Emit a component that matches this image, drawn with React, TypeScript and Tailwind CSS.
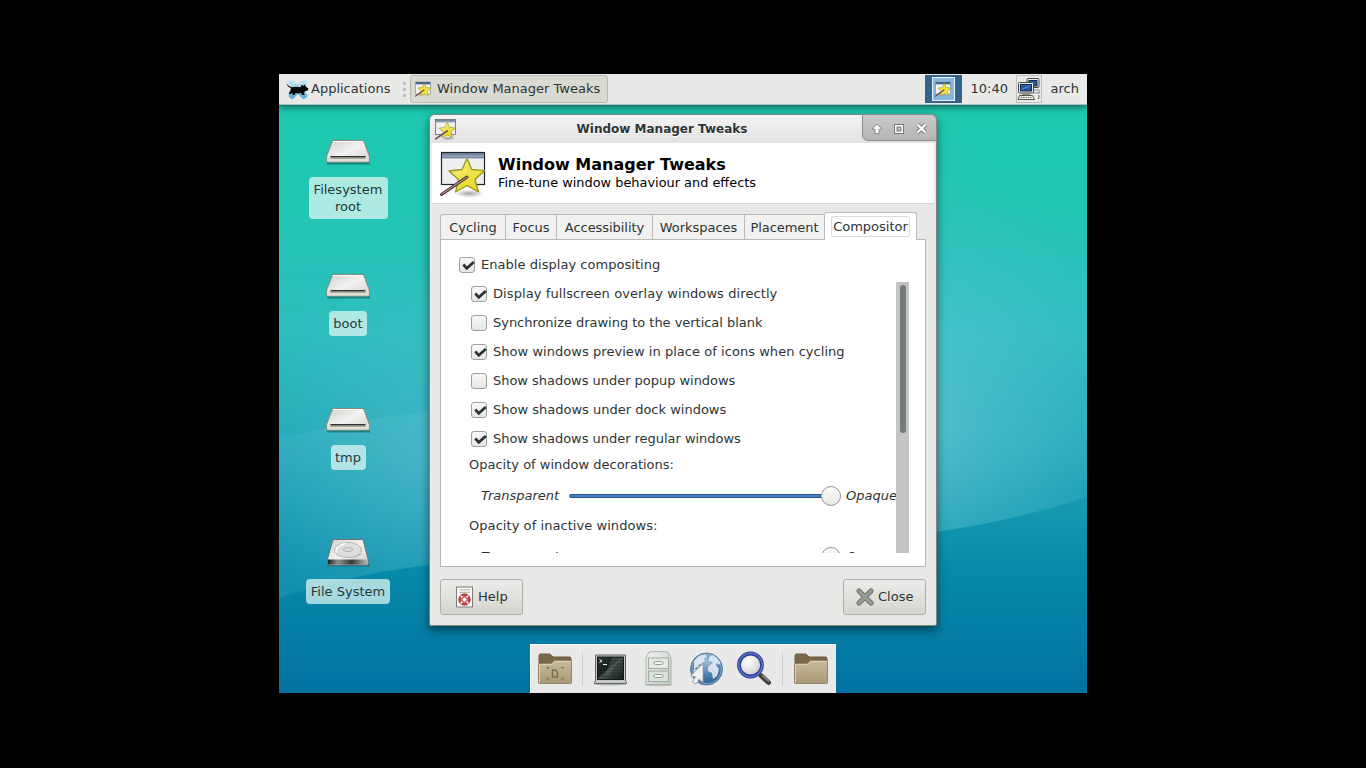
import React from "react";

function TweaksIcon({ className, small = false }: { className: string; small?: boolean }) {
  return (
    <svg viewBox="0 0 48 48" className={className}>
      <defs>
        <linearGradient id="tw-star" x1="0" y1="0" x2="0.6" y2="1">
          <stop offset="0" stopColor="#fbf47c" />
          <stop offset="1" stopColor="#e6d726" />
        </linearGradient>
        <linearGradient id="tw-bar" x1="0" y1="0" x2="0" y2="1">
          <stop offset="0" stopColor="#5c7590" />
          <stop offset="1" stopColor="#a3b6c9" />
        </linearGradient>
        <radialGradient id="tw-shadow">
          <stop offset="0" stopColor="#000" stopOpacity="0.35" />
          <stop offset="1" stopColor="#000" stopOpacity="0" />
        </radialGradient>
      </defs>
      {small ? (
        <>
          <rect x="2" y="3" width="44" height="36" fill="#f0f1f2" stroke="#8a929a" strokeWidth="2" />
          <rect x="2" y="3" width="44" height="7" fill="#46668a" />
          <path
            d="M28 8l5.500 11.500L47 21l-9.500 10 2.500 13-12-6-12 6 2.500-13L9 21l13.500-1.500z"
            fill="#f3e53c"
            stroke="#a89d2c"
            strokeWidth="2"
            strokeLinejoin="round"
          />
          <path d="M2 45L27 27" stroke="#6a4c48" strokeWidth="4" strokeLinecap="round" />
        </>
      ) : (
        <>
          <ellipse cx="31" cy="44.500" rx="15" ry="4" fill="url(#tw-shadow)" />
          <rect x="3.500" y="3.500" width="43" height="32" fill="#efeff0" stroke="#23272b" strokeWidth="1.200" />
          <rect x="4" y="4" width="42" height="4.500" fill="url(#tw-bar)" />
          <path d="M4 8.800h42" stroke="#3d4f63" strokeWidth="0.800" />
          <path
            d="M29 9.500l4.800 11 12.700 1.200-9.500 8.800 3.500 12.500-11.500-6.500-11.500 6.500 3-12.500L11 22l13-1.500z"
            fill="url(#tw-star)"
            stroke="#99932a"
            strokeWidth="1.300"
            strokeLinejoin="round"
          />
          <path d="M3.500 45.500L29 28" stroke="#3a2628" strokeWidth="3" strokeLinecap="round" />
          <path d="M4 45L29 28" stroke="#b98d8f" strokeWidth="1.400" strokeLinecap="round" />
        </>
      )}
    </svg>
  );
}

function MouseLogo() {
  return (
    <svg viewBox="0 0 24 22" className="h-[22px] w-6 shrink-0">
      <defs>
        <linearGradient id="mouse-x" x1="0" y1="0" x2="0" y2="22" gradientUnits="userSpaceOnUse">
          <stop offset="0" stopColor="#d8f1fa" />
          <stop offset="1" stopColor="#4da6d0" />
        </linearGradient>
      </defs>
      <path d="M5.500 4.500L18 17.500M18.500 4.500L6 17.500" stroke="url(#mouse-x)" strokeWidth="6.500" strokeLinecap="round" />
      <path
        d="M.5 5C2 8 4 8.800 6 9.300c3-1 6-.5 8.500 0l1-2.300 1.800.8 1.700-1.300.8 2.300 2.700 1.700-1 2.300-2.700.5-1 2.400 1.200 1.300h-3l-.8-2c-2 .5-4 .5-5.500 0l-1.200 2h-2L6.300 15 4 16.300l-1.300-1L4.500 12.500 4.800 10C2.500 9.300 1 7.500.5 5z"
        fill="#050607"
      />
    </svg>
  );
}

function NetworkIcon() {
  return (
    <svg viewBox="0 0 24 24" className="size-6">
      <rect x="10" y="1.500" width="12" height="9" rx="1" fill="#ecece4" stroke="#454b4b" />
      <rect x="12" y="3.500" width="8" height="5.500" fill="#2459a0" stroke="#122b50" />
      <path d="M15 13h7l.5 3H17z" fill="#ecece4" stroke="#72756f" strokeWidth=".8" />
      <path d="M2.500 18.500h13l2 4H1z" fill="#f3f2e4" stroke="#55584f" />
      <path d="M3.500 20.500h11" stroke="#5f625d" strokeDasharray="1.500 1" />
      <rect x="1.500" y="5.500" width="15" height="10.500" rx="1" fill="#ecece4" stroke="#454b4b" />
      <rect x="3.500" y="7.500" width="11" height="6.500" fill="#2459a0" stroke="#122b50" />
      <path d="M4.500 12.500l9-4" stroke="#5d8cc8" />
      <path d="M5 17.200h8" stroke="#60645f" />
      <path d="M21.500 18c1 1 1 2-.3 4" stroke="#555" fill="none" />
    </svg>
  );
}

function DriveIcon({ disk = false }: { disk?: boolean }) {
  return (
    <svg viewBox="0 0 48 30" className="h-[30px] w-12">
      <defs>
        <linearGradient id="dr-top" x1="0" y1="0" x2="1" y2="1">
          <stop offset="0" stopColor="#cfcfcc" />
          <stop offset=".5" stopColor="#f3f2f1" />
          <stop offset="1" stopColor="#cfcfcb" />
        </linearGradient>
        <linearGradient id="dr-front" x1="0" y1="0" x2="1" y2="0">
          <stop offset="0" stopColor="#1c211e" />
          <stop offset=".25" stopColor="#8b908d" />
          <stop offset=".6" stopColor="#343b37" />
          <stop offset="1" stopColor="#b5bab5" />
        </linearGradient>
      </defs>
      <path d="M3 27.500h43" stroke="#0d5050" strokeOpacity=".55" strokeWidth="2" />
      {disk ? (
        <>
          <path d="M9 1.500h30l5 19.500v6H3.500v-6z" fill="url(#dr-top)" stroke="#6e7370" strokeLinejoin="round" />
          <rect x="4" y="21.500" width="39.500" height="5" fill="url(#dr-front)" />
          <ellipse cx="24" cy="12" rx="13.500" ry="7.500" fill="#dededd" stroke="#b4b6b4" />
          <path d="M12.500 14.500a14 7.500 0 0 1 9-9" fill="none" stroke="#fff" strokeWidth="1.500" />
          <ellipse cx="24" cy="11.500" rx="5" ry="2" fill="#dcdcdc" stroke="#a5a7a5" strokeWidth=".8" />
          <path d="M30 19.500l8-4" stroke="#c0c2c0" strokeWidth="1.500" />
        </>
      ) : (
        <>
          <path d="M8.500 4.500h31l5.800 15.500v6H2.700v-6z" fill="url(#dr-top)" stroke="#85867c" strokeLinejoin="round" />
          <path d="M3.200 20.200h41.600v5.300H3.200z" fill="#e2e1d8" />
          <path d="M6.500 20.700h35" stroke="#2c3029" strokeWidth="1.600" />
          <path d="M6.500 22.200h35" stroke="#8a8c82" />
          <path d="M9 5.500h30" stroke="#fff" />
        </>
      )}
    </svg>
  );
}

function FolderIcon({ docs = false }: { docs?: boolean }) {
  return (
    <svg viewBox="0 0 36 36" className="size-9">
      <defs>
        <linearGradient id="fo" x1="0" y1="0" x2="0" y2="1">
          <stop offset="0" stopColor="#c9bb9b" />
          <stop offset="1" stopColor="#a99976" />
        </linearGradient>
      </defs>
      <path d="M2 28V4.500q0-1.500 1.500-1.500h9.500l3 3H32.500q1.500 0 1.500 1.500V28z" fill="#786849" stroke="#6d5f43" />
      <path
        d="M1.500 31.500V13.500q0-1 1-1H14l3.500-3H33.500q1 0 1 1v21q0 1-1 1h-31q-1 0-1-1z"
        fill="url(#fo)"
        stroke="#93846a"
      />
      <path d="M2.500 31V13.500h12L18 10.500h15.500" fill="none" stroke="#dccfb2" />
      {docs && (
        <g fill="none" stroke="#7c6d50" strokeWidth="1.500">
          <path d="M15.500 19h3l2 2.500V26h-5z" />
          <path d="M10.500 18v-1.500h2M26 18v-1.500h-2M10.500 26.500V28h2M26 26.500V28h-2" strokeWidth="1.200" />
        </g>
      )}
    </svg>
  );
}

function TerminalIcon() {
  return (
    <svg viewBox="0 0 36 36" className="size-9">
      <defs>
        <linearGradient id="te" x1="0" y1="0" x2="1" y2="1">
          <stop offset="0" stopColor="#2b3634" />
          <stop offset=".45" stopColor="#1b2423" />
          <stop offset=".5" stopColor="#46534f" />
          <stop offset="1" stopColor="#16201f" />
        </linearGradient>
      </defs>
      <ellipse cx="18" cy="33" rx="17" ry="1.500" fill="#000" fillOpacity=".25" />
      <path d="M3.500 4h30v25.500l1 2v1H2.500v-1l1-2z" fill="#c4c9c3" stroke="#616763" />
      <rect x="5.500" y="6" width="26" height="22.500" fill="url(#te)" stroke="#101716" />
      <path d="M20 6.500h9L17 24h-4z" fill="#81908b" fillOpacity=".3" />
      <path d="M6 10h25M6 13h25M6 16h25M6 19h25M6 22h25M6 25h25" stroke="#0c1515" strokeOpacity=".35" />
      <path d="M7.500 8.500l2.500 1.500-2.500 1.500M11 13.500h4" fill="none" stroke="#f1f5f3" />
    </svg>
  );
}

function CabinetIcon() {
  return (
    <svg viewBox="0 0 36 36" className="size-9">
      <defs>
        <linearGradient id="ca" x1="0" y1="0" x2="1" y2="1">
          <stop offset="0" stopColor="#eef2ee" />
          <stop offset="1" stopColor="#c0c9c1" />
        </linearGradient>
      </defs>
      <ellipse cx="18.500" cy="34" rx="14" ry="1.500" fill="#000" fillOpacity=".18" />
      <path d="M9 1q9.500-1 19 0l3 6v26.500H6V7z" fill="url(#ca)" stroke="#aab4ab" strokeLinejoin="round" />
      <rect x="8.500" y="7" width="20" height="10.500" fill="#e4e9e4" stroke="#a1aba2" />
      <rect x="8.500" y="20" width="20" height="10.500" fill="#dbe1db" stroke="#a1aba2" />
      <rect x="14" y="10.500" width="9" height="3" rx="1.500" fill="#f3f5f3" stroke="#949d95" />
      <rect x="14" y="23.500" width="9" height="3" rx="1.500" fill="#f3f5f3" stroke="#949d95" />
    </svg>
  );
}

function GlobeIcon() {
  return (
    <svg viewBox="0 0 36 36" className="size-9">
      <defs>
        <radialGradient id="gl" cx=".5" cy=".25" r=".75">
          <stop offset="0" stopColor="#9dbdd8" />
          <stop offset=".6" stopColor="#4f7eac" />
          <stop offset="1" stopColor="#2c5a8c" />
        </radialGradient>
      </defs>
      <circle cx="18.500" cy="18" r="16" fill="url(#gl)" stroke="#547da6" />
      <circle cx="18.500" cy="18" r="14.800" fill="none" stroke="#b4cde3" strokeOpacity=".6" />
      <path
        d="M6 10l5-5 6-1.500 2 2-3 2 1 2.500-4 3-3 1 1 2-3 .5-2 3zM21 6l4-2 4 3 3.500 5-1.500 2-2-2-1 2 3 4-2 7-4 3-1-6-4-2 0-4 3-3 2-1-2-2-2 1zM5 19l6-1 4 4-2 8-4-3z"
        fill="#dfe9f2"
        fillOpacity=".92"
      />
      <path d="M15 12.500L2.500 25l5 .8-3 5.200 3.500 2 3.200-5 3.800 3.500z" fill="#f1f1f1" stroke="#9a9ea3" strokeWidth=".9" strokeLinejoin="round" />
    </svg>
  );
}

function SearchIcon() {
  return (
    <svg viewBox="0 0 36 36" className="size-9">
      <defs>
        <radialGradient id="se" cx=".4" cy=".35" r=".7">
          <stop offset="0" stopColor="#fff" />
          <stop offset="1" stopColor="#c6c8ca" />
        </radialGradient>
      </defs>
      <path d="M22.500 22.500l3 3" stroke="#8f918f" strokeWidth="4" />
      <path d="M25.500 25l7 6.500" stroke="#3f413d" strokeWidth="5" strokeLinecap="round" />
      <path d="M26.500 24.500l6 5.500" stroke="#8c8e89" strokeWidth="1.600" strokeLinecap="round" />
      <circle cx="14.500" cy="14" r="11.500" fill="url(#se)" stroke="#2d3f92" strokeWidth="3.800" />
      <circle cx="14.500" cy="14" r="11.700" fill="none" stroke="#5a72c4" strokeWidth="1.600" />
    </svg>
  );
}

function Check({ on }: { on: boolean }) {
  return (
    <span className="size-4 shrink-0 rounded-[3px] border border-[#a0a09c] bg-linear-to-b from-[#f9f9f9] to-[#e6e6e6]">
      {on && (
        <svg viewBox="0 0 14 14" className="size-3.5 overflow-visible">
          <path d="M3.300 6.500l3.500 3.800 7-6.300" fill="none" stroke="#2a3233" strokeWidth="2.700" />
        </svg>
      )}
    </span>
  );
}

function Slider() {
  return (
    <div className="mt-[13px] flex h-5 shrink-0 items-center pl-3 italic">
      <span className="w-[88px] shrink-0">Transparent</span>
      <span className="flex h-5 w-[272px] shrink-0 items-center">
        <span className="h-1 w-[252px] rounded-l-sm border-y border-[#245580] bg-[#4383bb]" />
        <span className="size-5 rounded-full border border-[#92928e] bg-linear-to-b from-[#fafafa] to-[#e9e9e9]" />
      </span>
      <span className="ml-[5px]">Opaque</span>
    </div>
  );
}

const options = [
  { label: "Display fullscreen overlay windows directly", on: true, spacing: "tracking-[0.09px]" },
  { label: "Synchronize drawing to the vertical blank", on: false, spacing: "tracking-[-0.03px]" },
  { label: "Show windows preview in place of icons when cycling", on: true, spacing: "tracking-[0.045px]" },
  { label: "Show shadows under popup windows", on: false, spacing: "tracking-[-0.03px]" },
  { label: "Show shadows under dock windows", on: true, spacing: "tracking-normal" },
  { label: "Show shadows under regular windows", on: true, spacing: "tracking-[-0.03px]" },
];

const tabs = [
  { label: "Cycling", width: "w-[65px]" },
  { label: "Focus", width: "w-[51px]" },
  { label: "Accessibility", width: "w-24" },
  { label: "Workspaces", width: "w-[92px]" },
  { label: "Placement", width: "w-20" },
];

const shortcuts = [
  { label: "Filesystem\nroot", place: "top-[62px]", box: "w-[79px]", disk: false },
  { label: "boot", place: "top-[196px]", box: "w-[38px]", disk: false },
  { label: "tmp", place: "top-[330px]", box: "w-[35px]", disk: false },
  { label: "File System", place: "top-[464px]", box: "w-[84px]", disk: true },
];

function Wallpaper() {
  return (
    <svg viewBox="0 0 808 619" className="absolute inset-0 h-full w-full">
      <defs>
        <linearGradient id="sky" x1="0" y1="0" x2="0" y2="1">
          <stop offset="0" stopColor="#1dcaae" />
          <stop offset=".2" stopColor="#21c6b3" />
          <stop offset=".42" stopColor="#2dbdbe" />
          <stop offset=".6" stopColor="#24a8b8" />
          <stop offset=".8" stopColor="#078aa9" />
          <stop offset="1" stopColor="#0271a0" />
        </linearGradient>
        <radialGradient id="glow" cx="620" cy="350" r="270" gradientUnits="userSpaceOnUse">
          <stop offset="0" stopColor="#6fcdd6" stopOpacity=".65" />
          <stop offset="1" stopColor="#55bfd0" stopOpacity="0" />
        </radialGradient>
        <radialGradient id="glow2" cx="170" cy="375" r="200" gradientUnits="userSpaceOnUse">
          <stop offset="0" stopColor="#6cc5d6" stopOpacity=".42" />
          <stop offset="1" stopColor="#55bfd0" stopOpacity="0" />
        </radialGradient>
        <linearGradient id="lens" x1="0" y1="0" x2="808" y2="0" gradientUnits="userSpaceOnUse">
          <stop offset="0" stopColor="#6fcbd8" stopOpacity=".12" />
          <stop offset=".2" stopColor="#6fcbd8" stopOpacity=".18" />
          <stop offset=".78" stopColor="#6fcbd8" stopOpacity=".04" />
          <stop offset="1" stopColor="#6fcbd8" stopOpacity="0" />
        </linearGradient>
      </defs>
      <rect width="808" height="619" fill="url(#sky)" />
      <path d="M0 0H808V423Q735 447 657 458Q400 478 150 491Q100 497 60 507Q30 515 0 524z" fill="url(#glow)" />
      <path d="M0 0H808V423Q735 447 657 458Q400 478 150 491Q100 497 60 507Q30 515 0 524z" fill="url(#glow2)" />
      <path d="M0 365Q70 346 150 338Q400 320 808 350V423Q735 447 657 458Q400 478 150 491Q100 497 60 507Q30 515 0 524z" fill="url(#lens)" />
    </svg>
  );
}

export default function App() {
  return (
    <div className="flex h-screen w-screen justify-center overflow-hidden bg-black pt-[74px] font-['DejaVu_Sans',sans-serif] text-[13px] leading-4 text-[#2e3436]">
      <div className="relative h-[619px] w-[808px] overflow-hidden">
        <Wallpaper />

        <header className="relative flex h-[31px] items-center border-b border-[#a9bdb8] bg-[#e9e9e8] shadow-[0_2px_7px_rgba(0,0,0,.55)]">
          <div className="flex w-[122px] items-center pl-[7px]">
            <MouseLogo />
            <span className="ml-px whitespace-nowrap">Applications</span>
          </div>
          <div className="flex w-[9px] flex-col gap-[3px] pl-[2px]">
            <i className="size-[3px] bg-[#bdbdbb]" />
            <i className="size-[3px] bg-[#bdbdbb]" />
            <i className="size-[3px] bg-[#bdbdbb]" />
          </div>
          <div className="flex h-7 w-[198px] items-center rounded-[3px] border border-[#b9bab1] bg-[#d9dad1] pl-1">
            <TweaksIcon small className="size-4" />
            <span className="ml-1.5 whitespace-nowrap">Window Manager Tweaks</span>
          </div>
          <div className="flex-1" />
          <div className="flex h-7 w-[37px] justify-center bg-[#35638f] pt-[2px]">
            <div className="flex h-6 w-[23px] items-center justify-center border border-[#f0f4f8] bg-[#86b6e8]">
              <TweaksIcon small className="size-4" />
            </div>
          </div>
          <span className="ml-[9px] w-[37px] whitespace-nowrap">10:40</span>
          <div className="ml-2 flex h-7 w-[26px] items-center justify-center border border-[#bfbfbd]">
            <NetworkIcon />
          </div>
          <span className="mr-2 ml-[9px]">arch</span>
        </header>

        {shortcuts.map((s) => (
          <div key={s.place} className={"absolute left-[9px] flex w-[120px] flex-col items-center gap-[11px] " + s.place}>
            <DriveIcon disk={s.disk} />
            <span
              className={
                "rounded-sm bg-[#dcf5f1]/75 py-1 text-center leading-[17px] whitespace-pre text-[#24393b] " + s.box
              }
            >
              {s.label}
            </span>
          </div>
        ))}

        <section className="absolute top-[40px] left-[150px] flex h-[512px] w-[508px] flex-col rounded-t-[6px] rounded-b-[2px] border border-[#7e8583] bg-[#e8e8e7] px-[2px] shadow-[0_4px_10px_rgba(0,0,0,.5)]">
          <div className="-mx-[2px] flex h-7 shrink-0 rounded-t-[5px] bg-linear-to-b from-[#f3f3f3] to-[#e2e2e2]">
            <div className="w-8 pt-[3px] pl-1">
              <TweaksIcon className="size-[22px]" />
            </div>
            <h1 className="flex-1 pt-1.5 text-center text-[12px] font-bold whitespace-nowrap [text-shadow:0_1px_0_#fff]">
              Window Manager Tweaks
            </h1>
            <div className="z-10 -mt-px -mr-px h-[27px] w-[75px] rounded-tr-[6px] rounded-bl-[6px] border border-[#8b8b8b] bg-linear-to-b from-[#c9c9c9] to-[#b5b5b5]">
              <svg viewBox="0 0 73 25" className="h-[25px] w-[73px]" fill="none" stroke="#777">
                <path d="M14 9l5 5.200h-3V18.500h-4v-4.300H9z" fill="#fff" strokeWidth=".8" />
                <rect x="31.500" y="9.500" width="9" height="9" fill="#fff" />
                <rect x="34" y="12" width="4" height="4" fill="#c1c1c1" />
                <path d="M54.500 9.500l8 8M62.500 9.500l-8 8" strokeWidth="4.200" />
                <path d="M54.500 9.500l8 8M62.500 9.500l-8 8" stroke="#fff" strokeWidth="2.400" />
              </svg>
            </div>
          </div>

          <div className="flex h-[61px] shrink-0 border-b border-[#d0d0ce] bg-white pt-1.5 pl-1.5 text-black">
            <TweaksIcon className="size-12" />
            <div className="pt-1.5 pl-3 whitespace-nowrap">
              <h2 className="text-[16px] leading-5 font-bold">Window Manager Tweaks</h2>
              <p className="text-[12.900px] leading-4">Fine-tune window behaviour and effects</p>
            </div>
          </div>

          <nav className="relative z-10 mx-2 mt-2 -mb-px flex h-7 shrink-0 items-end">
            {tabs.map((t, i) => (
              <div
                key={t.label}
                className={
                  "flex h-[26px] items-center justify-center border-y border-l border-[#bababa] bg-[#f1f1f0] pt-0.5 tracking-[-0.05px] whitespace-nowrap " +
                  t.width +
                  (i === 0 ? " rounded-tl-[3px]" : "")
                }
              >
                {t.label}
              </div>
            ))}
            <div className="flex h-7 w-[93px] items-center justify-center rounded-t-[3px] border border-b-0 border-[#bababa] bg-white whitespace-nowrap">
              <span className="flex h-[21px] w-[79px] items-center justify-center rounded-xs border border-[#dcdcda]">
                Compositor
              </span>
            </div>
          </nav>

          <main className="mx-2 h-[328px] shrink-0 border border-[#b6b6b4] bg-white">
            <label className="mt-[17px] ml-[18px] flex h-4 items-center gap-1.5 tracking-[0.04px] whitespace-nowrap">
              <Check on />
              Enable display compositing
            </label>
            <div className="mt-[9px] ml-7 flex h-[271px] w-[440px] overflow-hidden">
              <div className="flex h-full w-[427px] flex-col overflow-hidden whitespace-nowrap">
                <div className="flex shrink-0 flex-col gap-[13px] pt-1 pl-0.5">
                  {options.map((o) => (
                    <label key={o.label} className={"flex h-4 items-center gap-1.5 " + o.spacing}>
                      <Check on={o.on} />
                      {o.label}
                    </label>
                  ))}
                </div>
                <p className="mt-2.5 h-4 shrink-0">Opacity of window decorations:</p>
                <Slider />
                <p className="mt-3 h-4 shrink-0 tracking-[0.06px]">Opacity of inactive windows:</p>
                <Slider />
              </div>
              <div className="flex w-[13px] justify-center bg-[#c4c4c3] pt-[3px]">
                <div className="h-[148px] w-1.5 rounded-full bg-[#747c78]" />
              </div>
            </div>
          </main>

          <footer className="mx-2 mt-3 flex h-9 shrink-0 justify-between">
            <button className="flex w-[83px] items-center rounded-[3px] border border-[#adada8] bg-linear-to-b from-[#ececec] to-[#d5d6ce] pl-3.5">
              <svg viewBox="0 0 20 22" className="h-[22px] w-5">
                <rect x="1.500" y="1" width="16" height="20" fill="#fbfbf9" stroke="#7b7d78" />
                <path d="M4 3.800h11M4 6.300h11" stroke="#a5b5a2" />
                <circle cx="9.500" cy="13.500" r="4.500" fill="#fff" stroke="#b93f3f" strokeWidth="3" />
                <path d="M5.500 9.500l8 8M13.500 9.500l-8 8" stroke="#fff" strokeWidth="1.700" />
                <circle cx="9.500" cy="13.500" r="5.700" fill="none" stroke="#b04a4a" strokeWidth=".7" />
                <circle cx="9.500" cy="13.500" r="2.500" fill="#fff" stroke="#a92f2f" strokeWidth=".9" />
              </svg>
              <span className="ml-[3px]">Help</span>
            </button>
            <button className="flex w-[83px] items-center rounded-[3px] border border-[#adada8] bg-linear-to-b from-[#ececec] to-[#d5d6ce] pl-[11px]">
              <svg viewBox="0 0 20 20" className="size-5" strokeLinecap="round" fill="none">
                <path d="M4 4l12 12M16 4L4 16" stroke="#686a64" strokeWidth="5.200" />
                <path d="M4 4l12 12M16 4L4 16" stroke="#989b92" strokeWidth="3.200" />
              </svg>
              <span className="ml-[3px]">Close</span>
            </button>
          </footer>
        </section>

        <footer className="absolute bottom-0 left-[251px] flex h-[49px] w-[306px] items-center border-t border-l border-white bg-[#e9e9e9] pl-1.5">
          <FolderIcon docs />
          <i className="mx-[9px] h-[34px] w-px bg-[#cfcfcf]" />
          <TerminalIcon />
          <span className="w-3" />
          <CabinetIcon />
          <span className="w-3" />
          <GlobeIcon />
          <span className="w-3" />
          <SearchIcon />
          <i className="mx-2.5 h-[34px] w-px bg-[#cfcfcf]" />
          <FolderIcon />
        </footer>
      </div>
    </div>
  );
}
